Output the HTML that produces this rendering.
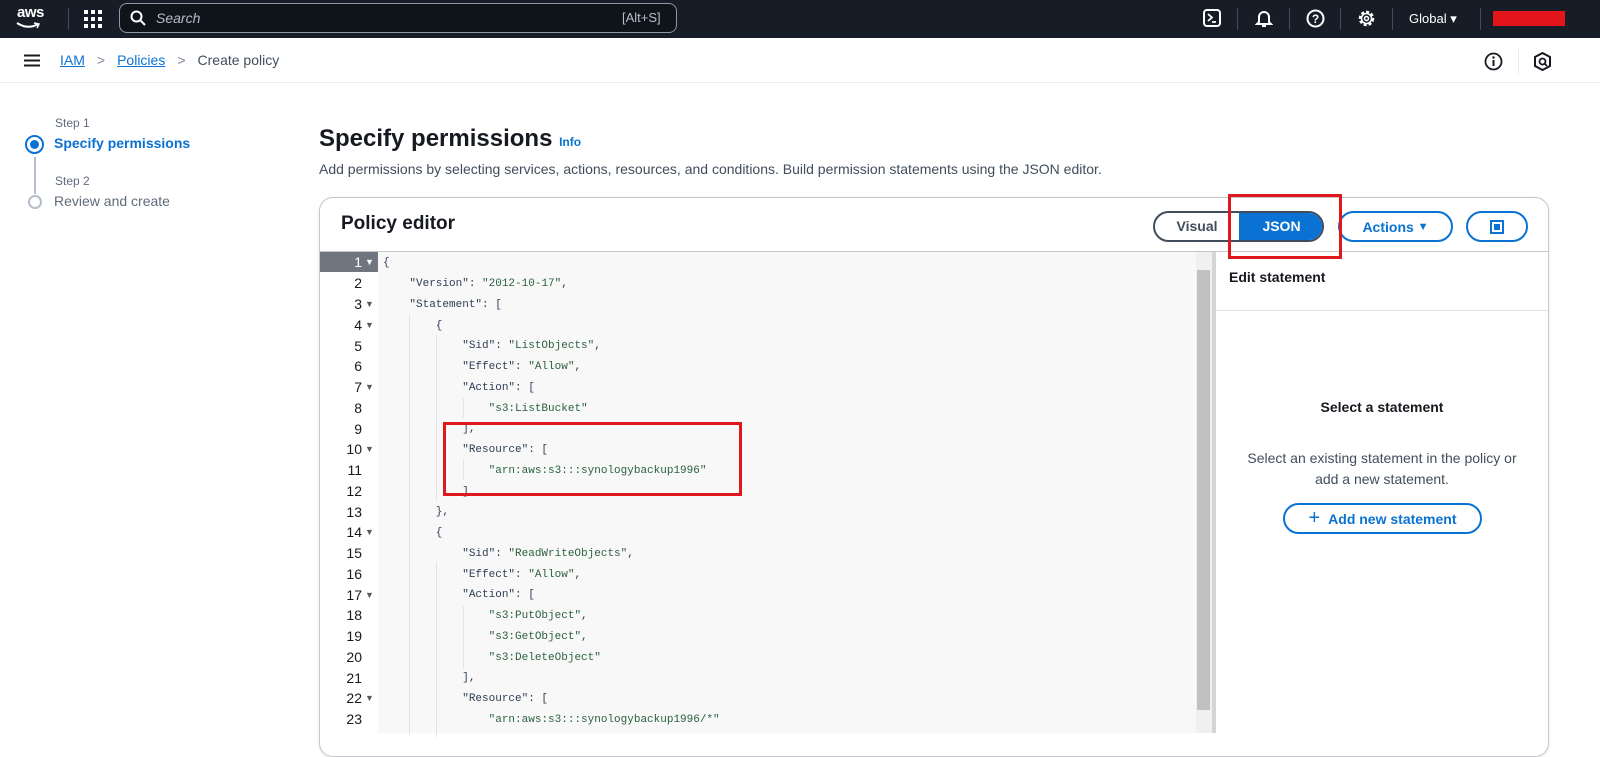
<!DOCTYPE html>
<html><head><meta charset="utf-8"><style>
*{box-sizing:border-box;margin:0;padding:0}
body{width:1600px;height:733px;overflow:hidden;background:#fff;font-family:"Liberation Sans",sans-serif;color:#16191f;position:relative}
.abs{position:absolute}
.top{left:0;top:0;width:1600px;height:38px;background:#161d26}
.sep{position:absolute;top:8px;width:1px;height:22px;background:#414d5c}
.crumb{left:0;top:38px;width:1600px;height:45px;background:#fff;border-bottom:1px solid #e9ebed}
a{color:#0972d3}
.code{font-family:"Liberation Mono",monospace;font-size:11px;white-space:pre;color:#2f3e55;transform:translateY(2px)}
.ln{position:absolute;left:320px;width:42px;text-align:right;font-family:"Liberation Sans",sans-serif;font-size:14px;color:#16191f}
.ar{position:absolute;left:365px;font-size:9px;color:#545b64}
.s{color:#2b6140}
.btn{position:absolute;height:31px;border:2px solid #0972d3;border-radius:16px;color:#0972d3;font-weight:bold;font-size:14px;display:flex;align-items:center;justify-content:center}
</style></head><body>
<div class="abs top">
  <div class="abs" style="left:17px;top:4px;color:#fff;font-size:15px;font-weight:bold;letter-spacing:-0.5px">aws</div>
  <svg class="abs" style="left:15px;top:21px" width="26" height="9"><path d="M2 2 Q13 9 23 3" stroke="#fff" stroke-width="2" fill="none"/><path d="M19 2 L24 3 L22 7" stroke="#fff" stroke-width="1.5" fill="none"/></svg>
  <div class="sep" style="left:68px"></div>
  <svg class="abs" style="left:84px;top:10px" width="18" height="18" fill="#fff"><rect x="0" y="0" width="4" height="4"/><rect x="7" y="0" width="4" height="4"/><rect x="14" y="0" width="4" height="4"/><rect x="0" y="7" width="4" height="4"/><rect x="7" y="7" width="4" height="4"/><rect x="14" y="7" width="4" height="4"/><rect x="0" y="14" width="4" height="4"/><rect x="7" y="14" width="4" height="4"/><rect x="14" y="14" width="4" height="4"/></svg>
  <div class="abs" style="left:119px;top:3px;width:558px;height:30px;border:1px solid #8d99a8;border-radius:8px;background:#0f141a"></div>
  <svg class="abs" style="left:130px;top:10px" width="16" height="16"><circle cx="6.5" cy="6.5" r="5" stroke="#fff" stroke-width="2" fill="none"/><path d="M10 10 L15 15" stroke="#fff" stroke-width="2"/></svg>
  <div class="abs" style="left:156px;top:10px;color:#b6bec9;font-style:italic;font-size:14px">Search</div>
  <div class="abs" style="left:622px;top:10px;color:#b6bec9;font-size:13px">[Alt+S]</div>
  <svg class="abs" style="left:1203px;top:9px" width="18" height="18"><rect x="1" y="1" width="16" height="16" rx="3" stroke="#fff" stroke-width="2" fill="none"/><path d="M5 5 L9 8.5 L5 12 M9 13 H13" stroke="#fff" stroke-width="1.8" fill="none"/></svg>
  <div class="sep" style="left:1237px"></div>
  <svg class="abs" style="left:1255px;top:9px" width="18" height="19"><path d="M4 13 V8 a5 5 0 0 1 10 0 V13 L16 15 H2 Z" stroke="#fff" stroke-width="2" fill="none"/><path d="M7 17 H11" stroke="#fff" stroke-width="2"/></svg>
  <div class="sep" style="left:1289px"></div>
  <svg class="abs" style="left:1306px;top:9px" width="19" height="19"><circle cx="9.5" cy="9.5" r="8" stroke="#fff" stroke-width="2" fill="none"/><text x="9.5" y="14" text-anchor="middle" fill="#fff" font-size="12" font-weight="bold" font-family="Liberation Sans">?</text></svg>
  <div class="sep" style="left:1340px"></div>
  <svg class="abs" style="left:1357px;top:9px" width="19" height="19"><circle cx="9.5" cy="9.5" r="6.5" stroke="#fff" stroke-width="2.5" stroke-dasharray="3 2" fill="none"/><circle cx="9.5" cy="9.5" r="5" stroke="#fff" stroke-width="1.5" fill="none"/><circle cx="9.5" cy="9.5" r="2" stroke="#fff" stroke-width="1.5" fill="none"/></svg>
  <div class="sep" style="left:1392px"></div>
  <div class="abs" style="left:1409px;top:11px;color:#fff;font-size:13px">Global ▾</div>
  <div class="sep" style="left:1480px"></div>
  <div class="abs" style="left:1493px;top:11px;width:72px;height:15px;background:#e3151a"></div>
</div>
<div class="abs crumb">
  <svg class="abs" style="left:24px;top:16px" width="16" height="13"><path d="M0 1.5H16M0 6.5H16M0 11.5H16" stroke="#16191f" stroke-width="2"/></svg>
  <div class="abs" style="left:60px;top:14px;font-size:14px"><a style="text-decoration:underline">IAM</a><span style="color:#7d8998;margin:0 12px">&gt;</span><a style="text-decoration:underline">Policies</a><span style="color:#7d8998;margin:0 12px">&gt;</span><span style="color:#414d5c">Create policy</span></div>
  <svg class="abs" style="left:1484px;top:14px" width="19" height="19"><circle cx="9.5" cy="9.5" r="8" stroke="#16191f" stroke-width="1.8" fill="none"/><path d="M9.5 8V14" stroke="#16191f" stroke-width="2"/><circle cx="9.5" cy="5.5" r="1.2" fill="#16191f"/></svg>
  <div class="abs" style="left:1518px;top:11px;width:1px;height:25px;background:#e9ebed"></div>
  <svg class="abs" style="left:1534px;top:14px" width="17" height="19"><path d="M8.5 1 L16 5 V14 L8.5 18 L1 14 V5 Z" stroke="#16191f" stroke-width="2" fill="none"/><circle cx="8.5" cy="9.5" r="3" stroke="#16191f" stroke-width="1.8" fill="none"/><path d="M10.5 11.5 L13 14" stroke="#16191f" stroke-width="1.8"/></svg>
</div>
<div class="abs" style="left:55px;top:116px;font-size:12px;color:#5f6b7a">Step 1</div>
<div class="abs" style="left:25px;top:135px;width:19px;height:19px;border:2px solid #0972d3;border-radius:50%"></div>
<div class="abs" style="left:30px;top:140px;width:9px;height:9px;background:#0972d3;border-radius:50%"></div>
<div class="abs" style="left:54px;top:135px;font-size:14px;font-weight:bold;color:#0972d3">Specify permissions</div>
<div class="abs" style="left:34px;top:157px;width:2px;height:37px;background:#b6bec9"></div>
<div class="abs" style="left:55px;top:174px;font-size:12px;color:#5f6b7a">Step 2</div>
<div class="abs" style="left:28px;top:195px;width:14px;height:14px;border:2px solid #b6bec9;border-radius:50%"></div>
<div class="abs" style="left:54px;top:193px;font-size:14px;color:#5f6b7a">Review and create</div>

<div class="abs" style="left:319px;top:125px;font-size:24px;font-weight:bold">Specify permissions <span style="font-size:12px;color:#0972d3">Info</span></div>
<div class="abs" style="left:319px;top:161px;font-size:14px;color:#414d5c">Add permissions by selecting services, actions, resources, and conditions. Build permission statements using the JSON editor.</div>

<div class="abs" style="left:319px;top:197px;width:1230px;height:560px;border:1px solid #c6c6cd;border-radius:14px;box-shadow:0 1px 3px rgba(0,0,0,.1)"></div>
<div class="abs" style="left:341px;top:213px;font-size:19px;font-weight:bold">Policy editor</div>
<div class="abs" style="left:1153px;top:211px;width:171px;height:31px;border:2px solid #414d5c;border-radius:16px;overflow:hidden">
  <div class="abs" style="left:0;top:0;width:84px;height:27px;font-size:14px;font-weight:bold;color:#414d5c;text-align:center;line-height:27px">Visual</div>
  <div class="abs" style="left:84px;top:0;width:85px;height:27px;background:#0972d3;font-size:14px;font-weight:bold;color:#fff;text-align:center;line-height:27px">JSON</div>
</div>
<div class="btn" style="left:1338px;top:211px;width:115px">Actions&nbsp; <span style="font-size:11px">▼</span></div>
<div class="btn" style="left:1466px;top:211px;width:62px"><div style="width:14px;height:14px;border:2px solid #0972d3;padding:2px"><div style="width:6px;height:6px;background:#0972d3"></div></div></div>

<div class="abs" style="left:320px;top:251px;width:1228px;height:1px;background:#c6c6cd"></div>
<div class="abs" style="left:320px;top:252px;width:58px;height:481px;background:#fff"></div>
<div class="abs" style="left:378px;top:252px;width:818px;height:481px;background:#f8f8f8"></div>
<div class="abs" style="left:1196px;top:252px;width:16px;height:481px;background:#f0f0f0"></div>
<div class="abs" style="left:1197px;top:270px;width:13px;height:440px;background:#c1c1c1"></div>
<div class="abs" style="left:1212px;top:252px;width:4px;height:481px;background:#d5d5d5"></div>
<div class="abs" style="left:320px;top:252px;width:58px;height:20px;background:#6f7680"></div>
<div class="abs" style="left:409px;top:315px;width:1px;height:420px;background:#e3e3e3"></div>
<div class="abs" style="left:436px;top:335px;width:1px;height:165px;background:#e3e3e3"></div>
<div class="abs" style="left:436px;top:562px;width:1px;height:175px;background:#e3e3e3"></div>
<div class="abs" style="left:463px;top:398px;width:1px;height:20px;background:#e3e3e3"></div>
<div class="abs" style="left:463px;top:460px;width:1px;height:20px;background:#e3e3e3"></div>
<div class="abs" style="left:463px;top:606px;width:1px;height:62px;background:#e3e3e3"></div>

<div class="ln" style="top:254px;color:#fff">1</div><div class="ar" style="top:257px;color:#fff">▼</div><div class="abs code" style="left:383px;top:255px">{</div>
<div class="ln" style="top:275px">2</div><div class="abs code" style="left:383px;top:276px">    "Version": <span class="s">"2012-10-17"</span>,</div>
<div class="ln" style="top:296px">3</div><div class="ar" style="top:299px">▼</div><div class="abs code" style="left:383px;top:297px">    "Statement": [</div>
<div class="ln" style="top:317px">4</div><div class="ar" style="top:320px">▼</div><div class="abs code" style="left:383px;top:318px">        {</div>
<div class="ln" style="top:338px">5</div><div class="abs code" style="left:383px;top:338px">            "Sid": <span class="s">"ListObjects"</span>,</div>
<div class="ln" style="top:358px">6</div><div class="abs code" style="left:383px;top:359px">            "Effect": <span class="s">"Allow"</span>,</div>
<div class="ln" style="top:379px">7</div><div class="ar" style="top:382px">▼</div><div class="abs code" style="left:383px;top:380px">            "Action": [</div>
<div class="ln" style="top:400px">8</div><div class="abs code" style="left:383px;top:401px">                <span class="s">"s3:ListBucket"</span></div>
<div class="ln" style="top:421px">9</div><div class="abs code" style="left:383px;top:421px">            ],</div>
<div class="ln" style="top:441px">10</div><div class="ar" style="top:444px">▼</div><div class="abs code" style="left:383px;top:442px">            "Resource": [</div>
<div class="ln" style="top:462px">11</div><div class="abs code" style="left:383px;top:463px">                <span class="s">"arn:aws:s3:::synologybackup1996"</span></div>
<div class="ln" style="top:483px">12</div><div class="abs code" style="left:383px;top:484px">            ]</div>
<div class="ln" style="top:504px">13</div><div class="abs code" style="left:383px;top:504px">        },</div>
<div class="ln" style="top:524px">14</div><div class="ar" style="top:527px">▼</div><div class="abs code" style="left:383px;top:525px">        {</div>
<div class="ln" style="top:545px">15</div><div class="abs code" style="left:383px;top:546px">            "Sid": <span class="s">"ReadWriteObjects"</span>,</div>
<div class="ln" style="top:566px">16</div><div class="abs code" style="left:383px;top:567px">            "Effect": <span class="s">"Allow"</span>,</div>
<div class="ln" style="top:587px">17</div><div class="ar" style="top:590px">▼</div><div class="abs code" style="left:383px;top:587px">            "Action": [</div>
<div class="ln" style="top:607px">18</div><div class="abs code" style="left:383px;top:608px">                <span class="s">"s3:PutObject"</span>,</div>
<div class="ln" style="top:628px">19</div><div class="abs code" style="left:383px;top:629px">                <span class="s">"s3:GetObject"</span>,</div>
<div class="ln" style="top:649px">20</div><div class="abs code" style="left:383px;top:650px">                <span class="s">"s3:DeleteObject"</span></div>
<div class="ln" style="top:670px">21</div><div class="abs code" style="left:383px;top:670px">            ],</div>
<div class="ln" style="top:690px">22</div><div class="ar" style="top:693px">▼</div><div class="abs code" style="left:383px;top:691px">            "Resource": [</div>
<div class="ln" style="top:711px">23</div><div class="abs code" style="left:383px;top:712px">                <span class="s">"arn:aws:s3:::synologybackup1996/*"</span></div>

<div class="abs" style="left:1229px;top:269px;font-size:14px;font-weight:bold">Edit statement</div>
<div class="abs" style="left:1216px;top:310px;width:332px;height:1px;background:#e0e0e0"></div>
<div class="abs" style="left:1216px;top:399px;width:332px;text-align:center;font-size:14px;font-weight:bold">Select a statement</div>
<div class="abs" style="left:1216px;top:448px;width:332px;text-align:center;font-size:14px;line-height:21px;color:#414d5c">Select an existing statement in the policy or<br>add a new statement.</div>
<div class="btn" style="left:1283px;top:503px;width:199px;height:31px;font-size:14px"><span style="font-size:20px;font-weight:normal;margin-right:8px">+</span>Add new statement</div>

<div class="abs" style="left:443px;top:422px;width:299px;height:74px;border:3px solid #e0181e"></div>
<div class="abs" style="left:1228px;top:194px;width:114px;height:65px;border:3px solid #e0181e"></div>
</body></html>
